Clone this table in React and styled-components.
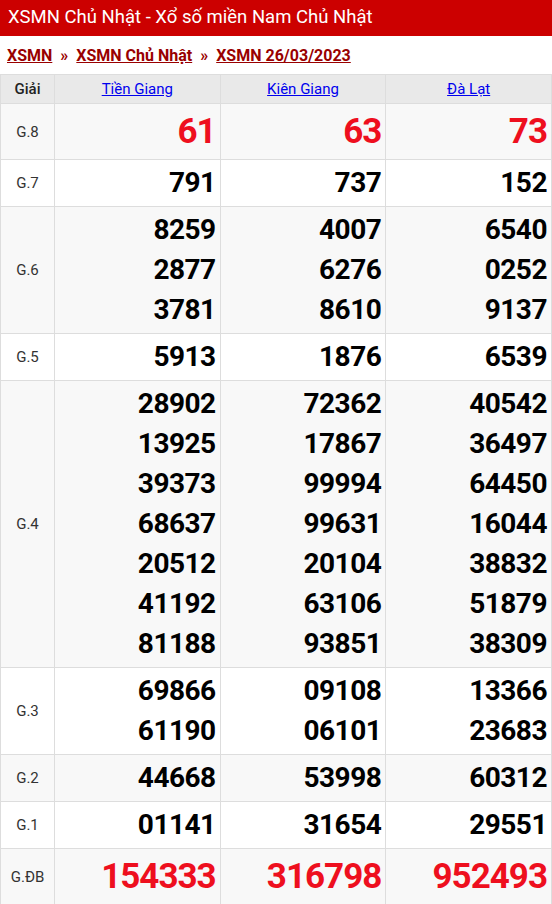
import React from 'react'
import styled, { createGlobalStyle } from 'styled-components'

const GlobalStyle = createGlobalStyle`
  body {
    margin: 0;
    background: #fff;
    font-family: Roboto, "Liberation Sans", Arial, sans-serif;
  }
`

const provinces = ['Tiền Giang', 'Kiên Giang', 'Đà Lạt']

const prizes = [
  { name: 'G.8', big: true, values: [['61'], ['63'], ['73']] },
  { name: 'G.7', values: [['791'], ['737'], ['152']] },
  { name: 'G.6', values: [['8259', '2877', '3781'], ['4007', '6276', '8610'], ['6540', '0252', '9137']] },
  { name: 'G.5', values: [['5913'], ['1876'], ['6539']] },
  {
    name: 'G.4',
    values: [
      ['28902', '13925', '39373', '68637', '20512', '41192', '81188'],
      ['72362', '17867', '99994', '99631', '20104', '63106', '93851'],
      ['40542', '36497', '64450', '16044', '38832', '51879', '38309'],
    ],
  },
  { name: 'G.3', values: [['69866', '61190'], ['09108', '06101'], ['13366', '23683']] },
  { name: 'G.2', values: [['44668'], ['53998'], ['60312']] },
  { name: 'G.1', values: [['01141'], ['31654'], ['29551']] },
  { name: 'G.ĐB', big: true, values: [['154333'], ['316798'], ['952493']] },
]

const App = () => {
  return (
    <Page>
      <GlobalStyle />
      <Title>XSMN Chủ Nhật - Xổ số miền Nam Chủ Nhật</Title>
      <Crumbs>
        <Crumb href="#">XSMN</Crumb>
        <Sep>»</Sep>
        <Crumb href="#">XSMN Chủ Nhật</Crumb>
        <Sep>»</Sep>
        <Crumb href="#">XSMN 26/03/2023</Crumb>
      </Crumbs>
      <Table>
        <colgroup>
          <col style={{ width: 54 }} />
          <col />
          <col />
          <col />
        </colgroup>
        <thead>
          <tr>
            <HeadCell>Giải</HeadCell>
            {provinces.map((p) => (
              <HeadCell key={p}>
                <Province href="#">{p}</Province>
              </HeadCell>
            ))}
          </tr>
        </thead>
        <tbody>
          {prizes.map((row, i) => (
            <Row key={row.name} $odd={i % 2 === 0}>
              <Label>{row.name}</Label>
              {row.values.map((list, j) => (
                <Cell key={j}>
                  {list.map((n) => (
                    <Num key={n} $big={row.big}>{n}</Num>
                  ))}
                </Cell>
              ))}
            </Row>
          ))}
        </tbody>
      </Table>
    </Page>
  )
}

const Page = styled.div`
  width: 552px;
`

const Title = styled.h1`
  margin: 0;
  height: 36px;
  background: #cc0000;
  color: #fff;
  font-size: 18.5px;
  font-weight: 400;
  line-height: 34px;
  padding: 0 8px;
`

const Crumbs = styled.div`
  height: 38px;
  display: flex;
  align-items: center;
  padding: 0 7px;
  gap: 8px;
  font-size: 16px;
  font-weight: 700;
`

const Crumb = styled.a`
  color: #990000;
  text-decoration: underline;
`

const Sep = styled.span`
  color: #990000;
  font-weight: 700;
`

const Table = styled.table`
  width: 552px;
  border-collapse: collapse;
  table-layout: fixed;
  border: 1px solid #dddddd;
`

const HeadCell = styled.th`
  background: #e9e9e9;
  border: 1px solid #dddddd;
  height: 28px;
  padding: 0;
  font-size: 15px;
  font-weight: 500;
  color: #222;
  text-align: center;
`

const Province = styled.a`
  color: #0000ee;
  font-weight: 400;
  text-decoration: underline;
`

const Row = styled.tr`
  background: ${(p) => (p.$odd ? '#f8f8f8' : '#ffffff')};
`

const Label = styled.td`
  border: 1px solid #dddddd;
  text-align: center;
  font-size: 15px;
  font-weight: 400;
  color: #333;
  padding: 0;
`

const Cell = styled.td`
  border: 1px solid #dddddd;
  text-align: right;
  padding: 3px 4px 3px 0;
  vertical-align: middle;
`

const Num = styled.div`
  font-size: ${(p) => (p.$big ? '35px' : '28px')};
  font-weight: 700;
  line-height: ${(p) => (p.$big ? '49px' : '40px')};
  color: ${(p) => (p.$big ? '#ee0f1e' : '#000')};
  letter-spacing: ${(p) => (p.$big ? '-1px' : '-0.5px')};
`

export default App
